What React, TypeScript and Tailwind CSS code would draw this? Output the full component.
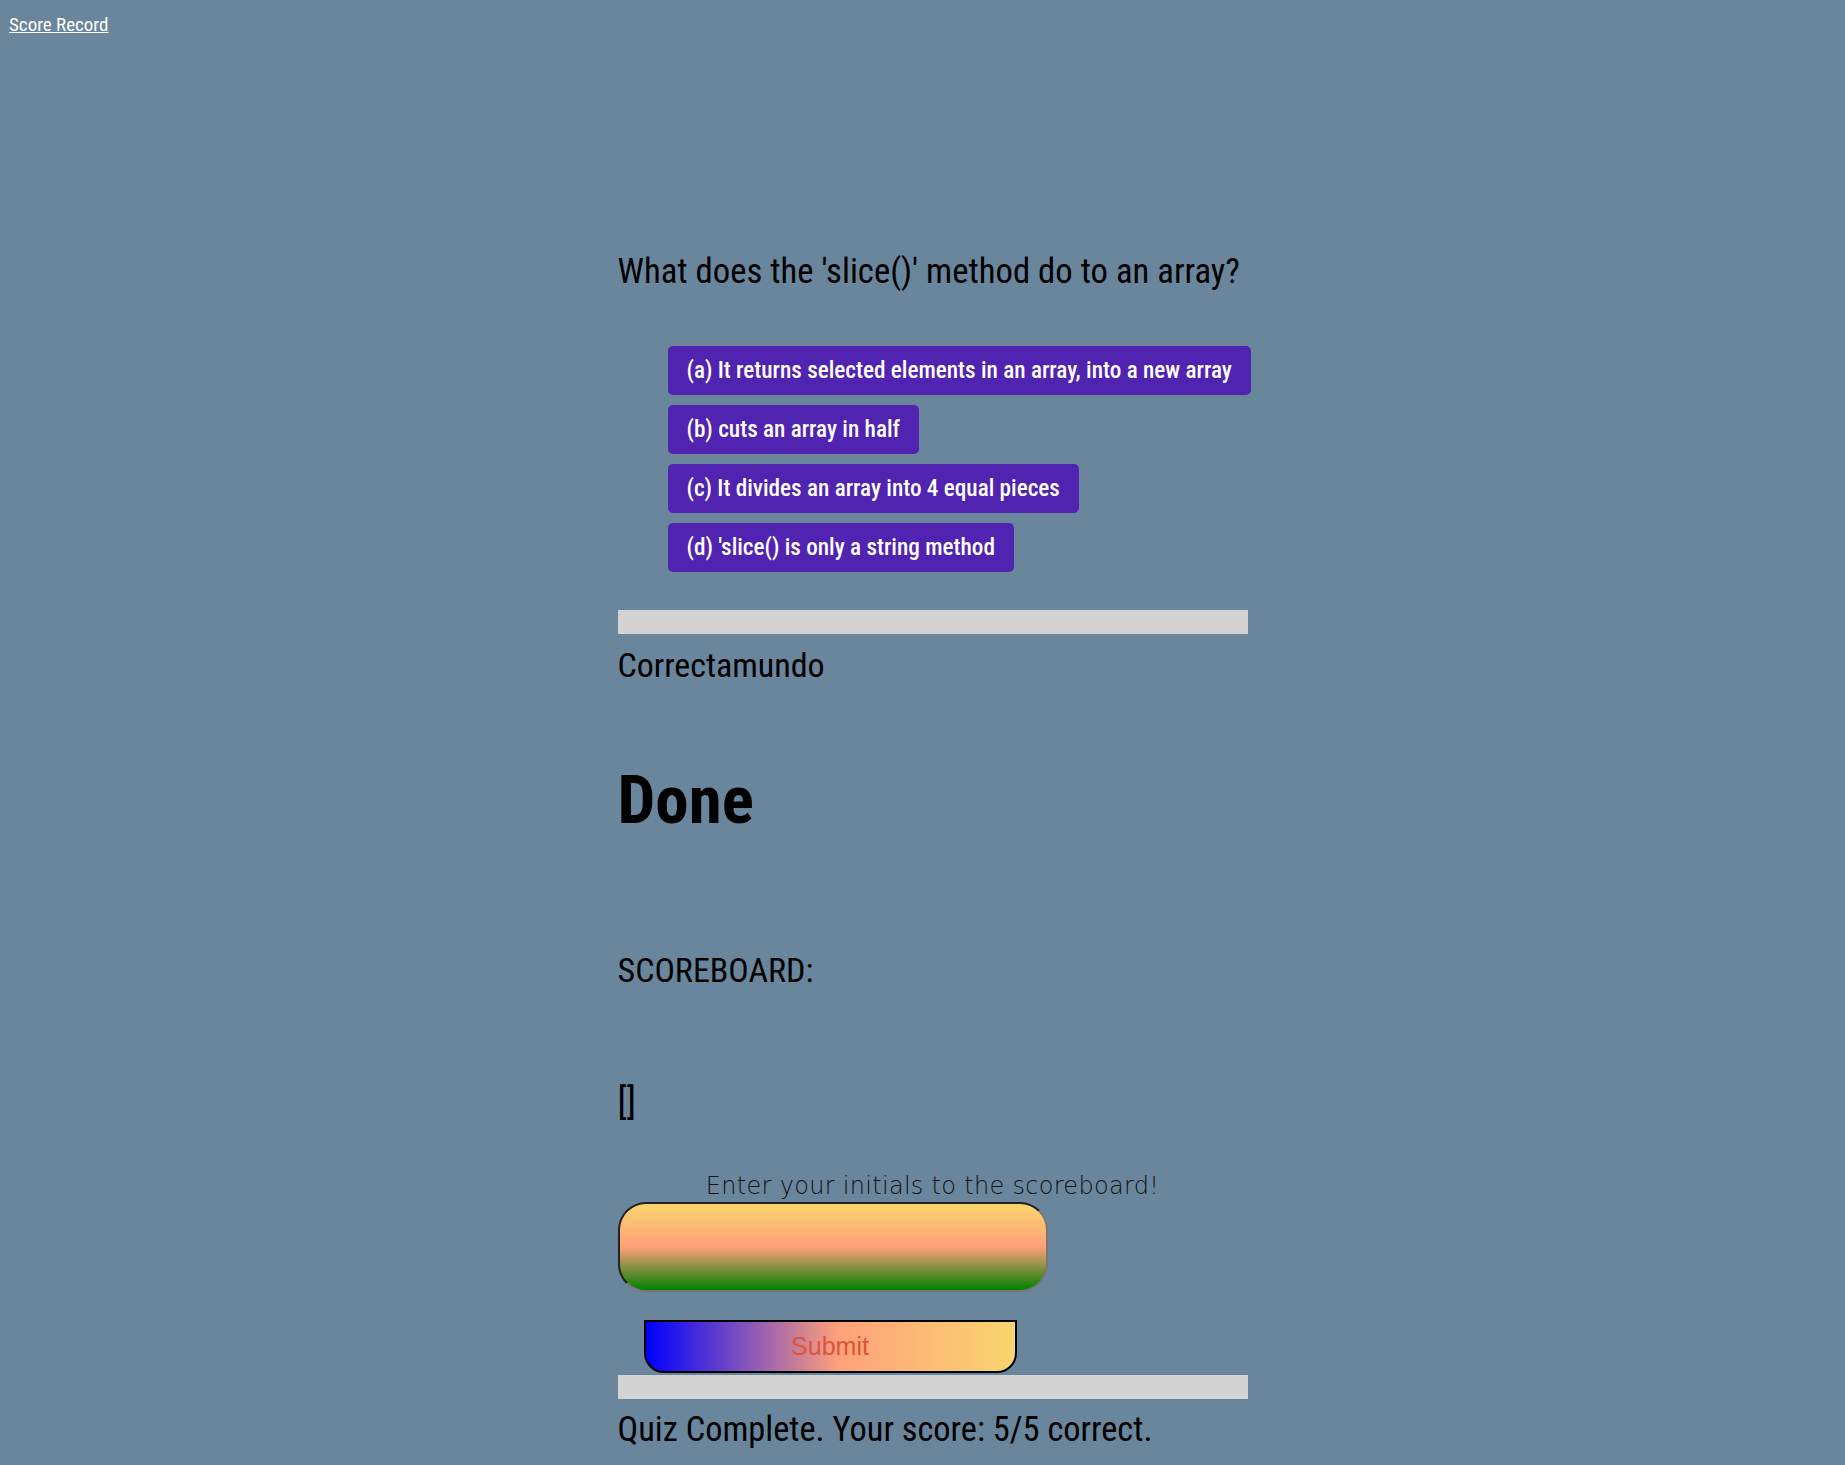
const choices = [
  "(a) It returns selected elements in an array, into a new array",
  "(b) cuts an array in half",
  "(c) It divides an array into 4 equal pieces",
  "(d) 'slice() is only a string method",
];

export default function App() {
  return (
    <div className="min-h-screen bg-[#6a869c] font-['Roboto_Condensed',Roboto,sans-serif] text-black">
      {/* Header */}
      <header className="pl-[9px] pt-[13px]">
        <a href="#" className="text-[19px] leading-[24px] text-white underline">
          Score Record
        </a>
      </header>

      <main className="mx-auto w-[650px] pl-5">
        {/* Question */}
        <h2 className="mt-[211px] text-[34.7px] leading-[44px] font-normal whitespace-nowrap">
          What does the 'slice()' method do to an array?
        </h2>

        <ul className="mt-[53px] flex flex-col items-start gap-[10px] pl-[50px]">
          {choices.map((choice, index) => (
            <li key={index}>
              <button className="flex h-[49px] items-center rounded-[5px] bg-[#5023b0] pr-[19px] pl-[19px] text-[23.2px] font-medium whitespace-nowrap text-white">
                {choice}
              </button>
            </li>
          ))}
        </ul>

        <div className="mt-[38px] h-[24px] bg-[#d3d3d3]" />
        <p className="mt-[9px] text-[34px] leading-[44px]">Correctamundo</p>

        {/* Done section */}
        <h1 className="mt-[73px] text-[67px] leading-[80px] font-bold">Done</h1>
        <h3 className="mt-[110px] text-[34px] leading-[40px]">SCOREBOARD:</h3>
        <p className="mt-[88px] text-[37px] leading-[48px]">[]</p>

        <form className="flex flex-col" onSubmit={(e) => e.preventDefault()}>
          <label className="mt-[45px] text-center font-['DejaVu_Sans',sans-serif] text-[24px] leading-[30px] font-light tracking-[0.3px] text-[#111]">
            Enter your initials to the scoreboard!
          </label>
          <input
            type="text"
            className="mt-[1px] h-[90px] w-[430px] rounded-[28px] border-2 border-t-[#222] border-r-[#777] border-b-[#777] border-l-[#222] bg-[linear-gradient(to_bottom,#f9d56e,#ffa07a_50%,#008000)] outline-none"
          />
          <button
            type="submit"
            className="mt-[28px] ml-[26px] h-[53px] w-[373px] rounded-b-[20px] border-2 border-black bg-[linear-gradient(to_right,#0000ff,#ffa07a_52%,#f9d56e)] font-['Liberation_Sans',Arial,sans-serif] text-[25px] text-[#d8563c]"
          >
            Submit
          </button>
        </form>

        <div className="mt-[2px] h-[24px] bg-[#d3d3d3]" />
        <p className="mt-[8px] pb-[14px] text-[34.4px] leading-[44px] whitespace-nowrap">
          Quiz Complete. Your score: 5/5 correct.
        </p>
      </main>
    </div>
  );
}
